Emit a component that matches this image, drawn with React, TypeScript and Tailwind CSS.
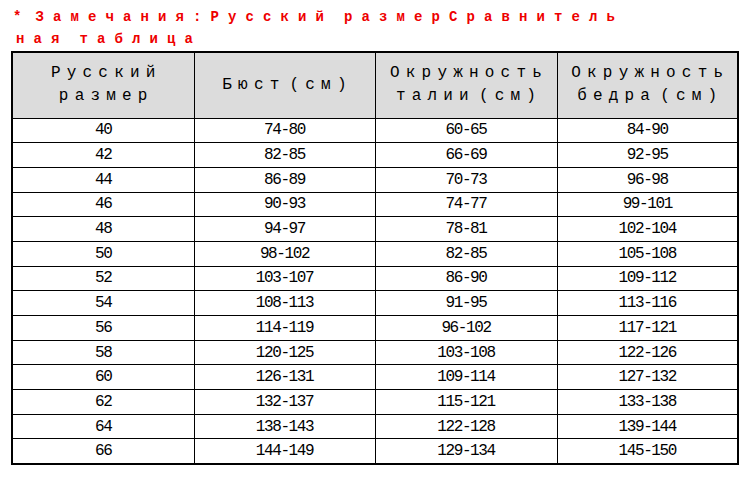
import React from "react";

const rows: [string, string, string, string][] = [
  ["40", "74-80", "60-65", "84-90"],
  ["42", "82-85", "66-69", "92-95"],
  ["44", "86-89", "70-73", "96-98"],
  ["46", "90-93", "74-77", "99-101"],
  ["48", "94-97", "78-81", "102-104"],
  ["50", "98-102", "82-85", "105-108"],
  ["52", "103-107", "86-90", "109-112"],
  ["54", "108-113", "91-95", "113-116"],
  ["56", "114-119", "96-102", "117-121"],
  ["58", "120-125", "103-108", "122-126"],
  ["60", "126-131", "109-114", "127-132"],
  ["62", "132-137", "115-121", "133-138"],
  ["64", "138-143", "122-128", "139-144"],
  ["66", "144-149", "129-134", "145-150"],
];

const headers: [string, string][] = [
  ["Русский", "размер"],
  ["Бюст (см)", ""],
  ["Окружность", "талии (см)"],
  ["Окружность", "бедра (см)"],
];

// words with a narrow gap instead of a full letter-spaced space
const Spaced = ({ text }: { text: string }) => (
  <>
    {text.split(" ").map((w, i) => (
      <React.Fragment key={i}>
        {i > 0 && <span className="inline-block w-[4px]"> </span>}
        {w}
      </React.Fragment>
    ))}
  </>
);

const App = () => {
  return (
    <div className="w-[749px] h-[483px] bg-white font-['Liberation_Mono',monospace] overflow-hidden">
      {/* Title note */}
      <div className="pt-[6px] text-[#ee0000] font-bold text-[14px] leading-[22px] tracking-[9.1px]">
        <div className="pl-[13px] whitespace-nowrap">
          <span className="tracking-[0px] mr-[14px]">*</span>Замечания:Русский<span className="inline-block w-[11px]"> </span>размерСравнитель
        </div>
        <div className="pl-[16px] whitespace-nowrap">
          ная<span className="inline-block w-[11px]"> </span>таблица
        </div>
      </div>

      {/* Size table */}
      <table className="ml-[11px] mt-[1px] border-collapse border-2 border-black text-black">
        <thead>
          <tr className="bg-[#dcdcdc] h-[66px]">
            {headers.map(([a, b], i) => (
              <th
                key={i}
                className={`border border-black font-normal text-[16px] leading-[23px] tracking-[6.2px] pl-[6px] text-center whitespace-nowrap ${i % 2 === 0 ? "w-[182px]" : "w-[181px]"}`}
              >
                <div>
                  <Spaced text={a} />
                </div>
                {b && (
                  <div>
                    <Spaced text={b} />
                  </div>
                )}
              </th>
            ))}
          </tr>
        </thead>
        <tbody>
          {rows.map((r) => (
            <tr key={r[0]} className="h-[24.7px]">
              {r.map((v, j) => (
                <td
                  key={j}
                  className="border border-black text-center text-[16px] leading-[20px] tracking-[-1.4px] p-0"
                >
                  {v}
                </td>
              ))}
            </tr>
          ))}
        </tbody>
      </table>
    </div>
  );
};

export default App;
